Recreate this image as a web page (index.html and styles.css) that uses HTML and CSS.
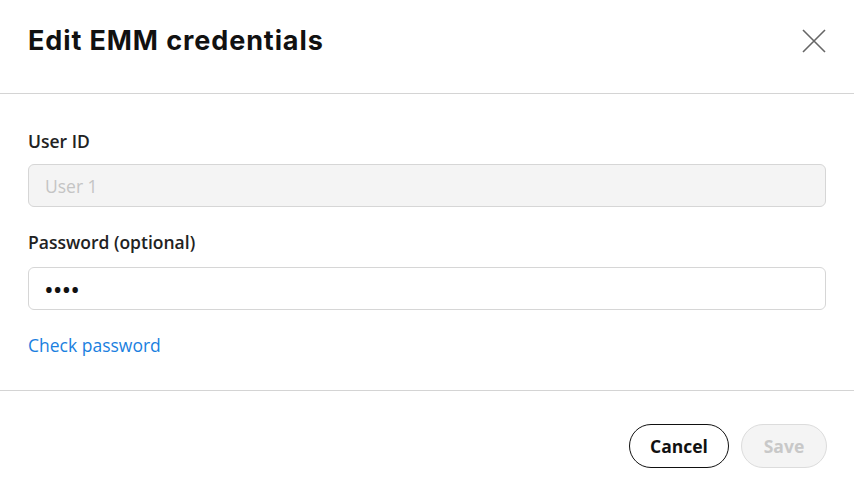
FILE: index.html
```html
<!DOCTYPE html>
<html lang="en">
<head>
    <meta charset="UTF-8">
    <title>Edit EMM credentials</title>
    <link rel="stylesheet" href="styles.css">
</head>
<body>
    <div class="dialog">
        <div class="dialog-header">
            <h1>Edit EMM credentials</h1>
            <button class="close-button" aria-label="Close">
                <svg width="24" height="24" viewBox="0 0 24 24">
                    <path d="M1 1 L23 23 M23 1 L1 23" stroke="#666" stroke-width="1.6" fill="none"/>
                </svg>
            </button>
        </div>

        <div class="dialog-body">
            <label class="field-label">User ID</label>
            <input class="input-field disabled" type="text" placeholder="User 1" disabled>

            <label class="field-label second">Password (optional)</label>
            <input class="input-field" type="password" value="abcd">

            <a class="link" href="#">Check password</a>
        </div>

        <div class="dialog-footer">
            <button class="btn btn-outline">Cancel</button>
            <button class="btn btn-disabled" disabled>Save</button>
        </div>
    </div>
</body>
</html>
```

FILE: styles.css
```css
* {
    margin: 0;
    padding: 0;
    box-sizing: border-box;
}

body {
    font-family: "Open Sans", "Noto Sans", sans-serif;
    background: white;
    color: #222;
}

.dialog {
    width: 854px;
    height: 496px;
    display: flex;
    flex-direction: column;
}

.dialog-header {
    height: 94px;
    border-bottom: 1px solid #d4d4d4;
    display: flex;
    align-items: center;
    justify-content: space-between;
    padding: 0 28px 12px 28px;
}

.dialog-header h1 {
    font-family: Inter, sans-serif;
    font-size: 27px;
    font-weight: 700;
    letter-spacing: 0.9px;
    color: #111;
}

.close-button {
    background: none;
    border: none;
    cursor: pointer;
    display: flex;
}

.dialog-body {
    padding: 35px 28px 33px 28px;
    display: flex;
    flex-direction: column;
    border-bottom: 1px solid #d4d4d4;
}

.field-label {
    font-size: 17.5px;
    line-height: 24px;
    font-weight: 600;
    color: #222;
    margin-bottom: 11px;
}

.field-label.second {
    margin-bottom: 13px;
}

.input-field {
    height: 43px;
    border: 1px solid #d6d6d6;
    border-radius: 6px;
    padding: 0 16px;
    font-family: inherit;
    font-size: 17.5px;
    color: #111;
    outline: none;
    margin-bottom: 23px;
}

.input-field.disabled {
    background: #f4f4f4;
}

.input-field.disabled::placeholder {
    color: #c4c4c4;
}

.input-field[type="password"] {
    font-size: 26px;
    letter-spacing: -1px;
    padding-left: 15px;
}

.link {
    font-size: 17.5px;
    line-height: 24px;
    color: #1a80e0;
    text-decoration: none;
    align-self: flex-start;
}

.dialog-footer {
    flex: 1;
    display: flex;
    justify-content: flex-end;
    align-items: flex-start;
    gap: 12px;
    padding: 33px 27px 0 0;
}

.btn {
    height: 44px;
    border-radius: 22px;
    font-family: inherit;
    font-size: 17.5px;
    font-weight: 700;
    padding: 0;
    cursor: pointer;
}

.btn-outline {
    width: 100px;
    background: white;
    border: 1px solid #111;
    color: #111;
}

.btn-disabled {
    width: 86px;
    background: #f4f4f4;
    border: 1px solid #dcdcdc;
    color: #c8c8c8;
    cursor: default;
}
```
